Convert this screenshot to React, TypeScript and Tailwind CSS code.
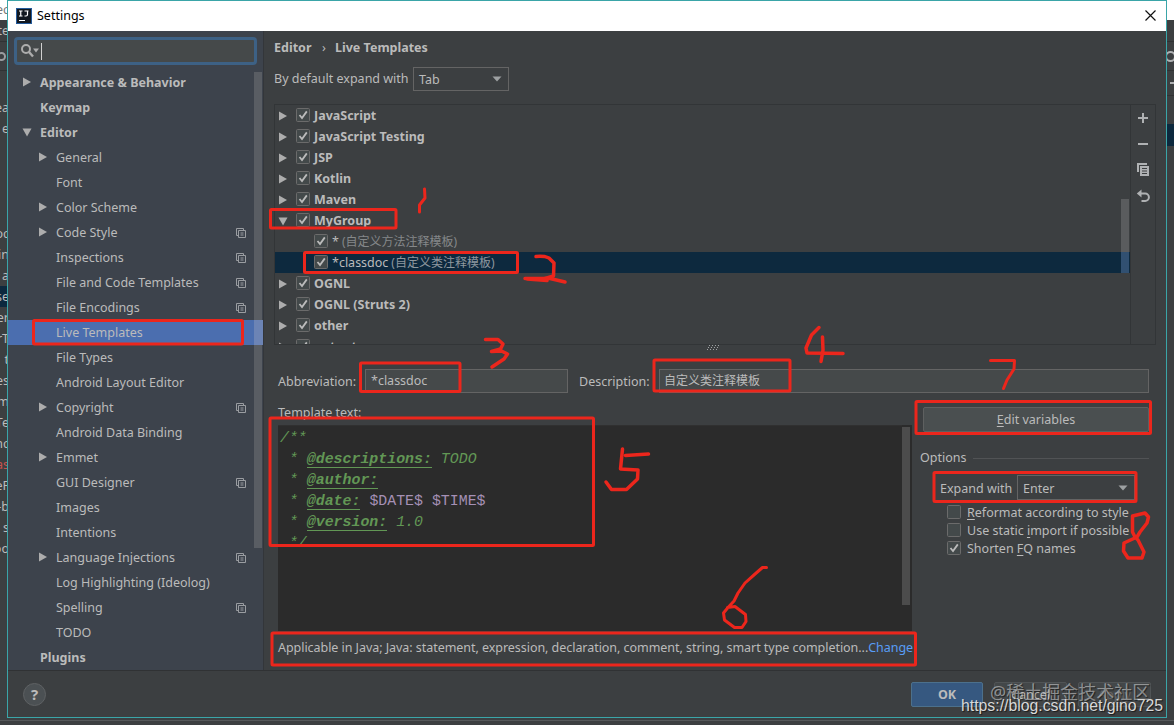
import React from 'react';
import clsx from 'clsx';

type NavItem = {
    label: string;
    level: 0 | 1;
    arrow?: 'right' | 'down';
    copy?: boolean;
    selected?: boolean;
};

const NAV: NavItem[] = [
    { label: 'Appearance & Behavior', level: 0, arrow: 'right' },
    { label: 'Keymap', level: 0 },
    { label: 'Editor', level: 0, arrow: 'down' },
    { label: 'General', level: 1, arrow: 'right' },
    { label: 'Font', level: 1 },
    { label: 'Color Scheme', level: 1, arrow: 'right' },
    { label: 'Code Style', level: 1, arrow: 'right', copy: true },
    { label: 'Inspections', level: 1, copy: true },
    { label: 'File and Code Templates', level: 1, copy: true },
    { label: 'File Encodings', level: 1, copy: true },
    { label: 'Live Templates', level: 1, selected: true },
    { label: 'File Types', level: 1 },
    { label: 'Android Layout Editor', level: 1 },
    { label: 'Copyright', level: 1, arrow: 'right', copy: true },
    { label: 'Android Data Binding', level: 1 },
    { label: 'Emmet', level: 1, arrow: 'right' },
    { label: 'GUI Designer', level: 1, copy: true },
    { label: 'Images', level: 1 },
    { label: 'Intentions', level: 1 },
    { label: 'Language Injections', level: 1, arrow: 'right', copy: true },
    { label: 'Log Highlighting (Ideolog)', level: 1 },
    { label: 'Spelling', level: 1, copy: true },
    { label: 'TODO', level: 1 },
    { label: 'Plugins', level: 0 },
];

type TemplateRow = { label: string; note?: string; open?: boolean; child?: boolean; selected?: boolean };

const TEMPLATES: TemplateRow[] = [
    { label: 'JavaScript' },
    { label: 'JavaScript Testing' },
    { label: 'JSP' },
    { label: 'Kotlin' },
    { label: 'Maven' },
    { label: 'MyGroup', open: true },
    { label: '*', note: '(自定义方法注释模板)', child: true },
    { label: '*classdoc', note: '(自定义类注释模板)', child: true, selected: true },
    { label: 'OGNL' },
    { label: 'OGNL (Struts 2)' },
    { label: 'other' },
    { label: 'output' },
];

// Slivers of the IDE window behind the dialog, one per 21px line
const BEHIND = ['ea', 'e', '', '', '', '', 'oc', 'cin', 'a', 'se', 'er', 'rT', 't', 'es', 'm', 'Te', 'nc', 'as', 'eF', '-b', 's', 'oo'];

const Arrow = ({ dir }: { dir: 'right' | 'down' }) => (
    <svg width="10" height="10" viewBox="0 0 10 10" className="shrink-0" fill="#adadad">
        {dir === 'right' ? <path d="M1 .5 9 5 1 9.5z" /> : <path d="M.5 1.5h9L5 9.5z" />}
    </svg>
);

const Check = ({ on = true }: { on?: boolean }) => (
    <svg width="14" height="14" viewBox="0 0 14 14" className="shrink-0" fill="none">
        <rect x=".5" y=".5" width="13" height="13" rx="1" fill="#43494a" stroke="#6b6b6b" />
        {on && <path d="M3.5 7 6 10 10.8 3.4" stroke="#bbbbbb" strokeWidth="1.8" />}
    </svg>
);

const CopyMark = () => (
    <svg width="10" height="10" viewBox="0 0 10 10" fill="none" stroke="#9a9da1" className="shrink-0">
        <path d="M2.5 7.5h-2v-7h7v2" />
        <path d="M2.5 2.5h7v7h-7zM4.5 5h3M4.5 7h3" />
    </svg>
);

const Caret = () => (
    <svg width="10" height="6" viewBox="0 0 10 6" className="shrink-0">
        <path d="M.5.5h9L5 5.5z" fill="#9da0a2" />
    </svg>
);

const Sidebar = () => (
    <div className="flex h-[639px] w-[256px] shrink-0 flex-col border-r border-[#33363a] bg-[#3d434c]">
        <div className="ml-[6px] mt-[6px] flex h-[28px] w-[243px] items-center rounded-[4px] border-[3px] border-[#3d6185] bg-[#45494a] pl-[4px]">
            <svg width="18" height="14" viewBox="0 0 18 14" fill="none">
                <circle cx="5" cy="5" r="4" stroke="#adadad" strokeWidth="2" />
                <path d="m8 8 4 4.5" stroke="#adadad" strokeWidth="2.4" />
                <path d="M12 4.5h6l-3 4z" fill="#adadad" />
            </svg>
            <div className="ml-[2px] h-[17px] w-px bg-[#d0d0d0]" />
        </div>
        <div className="mt-[5px] flex grow">
            <div className="w-[246px]">
                {NAV.map((item) => (
                    <div
                        key={item.label}
                        className={clsx(
                            'flex h-[25px] items-center whitespace-nowrap pr-[8px]',
                            item.level === 0 ? 'pl-[14px] font-bold' : 'pl-[30px]',
                            item.selected && 'bg-[#4b6eaf]'
                        )}
                    >
                        <div className="flex w-[18px] shrink-0 items-center pb-px">{item.arrow && <Arrow dir={item.arrow} />}</div>
                        <span className="grow">{item.label}</span>
                        {item.copy && <CopyMark />}
                    </div>
                ))}
            </div>
            <div className="flex w-[9px] flex-col">
                <div className="mt-[2px] h-[248px] w-[8px] bg-[#595d63]" />
                <div className="h-[25px] bg-[#6c84b5]" />
                <div className="h-[203px] w-[8px] bg-[#595d63]" />
            </div>
        </div>
    </div>
);

const TemplateTree = () => (
    <div className="ml-[10px] mt-[13px] flex h-[241px] w-[882px] border border-[#323537]">
        <div className="flex h-[239px] w-[855px] flex-col overflow-hidden">
            {TEMPLATES.map((row) => (
                <div
                    key={row.label}
                    className={clsx(
                        'flex h-[21px] shrink-0 items-center whitespace-nowrap',
                        row.child ? 'pl-[39px]' : 'pl-[3px]',
                        row.selected && 'bg-[#0d293e]'
                    )}
                >
                    {!row.child && (
                        <div className="flex w-[18px] shrink-0">
                            <Arrow dir={row.open ? 'down' : 'right'} />
                        </div>
                    )}
                    <div className="pb-px">
                        <Check />
                    </div>
                    <span className={clsx('ml-[4px]', !row.child && 'font-bold')}>{row.label}</span>
                    {row.note && (
                        <span className={clsx('ml-[3px] text-[12px]', row.selected ? 'text-[#8e979e]' : 'text-[#85888a]')}>{row.note}</span>
                    )}
                </div>
            ))}
        </div>
        <div className="relative w-0">
            <div className="absolute right-[1px] top-[94px] h-[53px] w-[8px] bg-[#5a5c5e]" />
            <div className="absolute right-[1px] top-[147px] h-[21px] w-[8px] bg-[#315071]" />
        </div>
        <div className="flex grow flex-col border-l border-[#323537] pl-[4px]">
            <svg width="16" height="100" viewBox="0 0 16 100" fill="none" stroke="#afb1b3" strokeWidth="2">
                <path d="M3 13h10M8 8v10M3 39h10" />
                <path d="M3 67v-8h9" />
                <path d="M5 61h9v10H5z" fill="#afb1b3" stroke="none" />
                <path d="M7 63.5h5M7 66h5M7 68.5h5" stroke="#3c3f41" strokeWidth="1" />
                <path d="M4 88.5h6.2a3.7 3.7 0 0 1 0 7.4H6.5" />
                <path d="M1.8 88.5 6.5 84.5v8z" fill="#afb1b3" stroke="none" />
            </svg>
        </div>
    </div>
);

const Tag = ({ children }: { children: React.ReactNode }) => (
    <span className="border-b border-[#629755] font-bold text-[#629755]">{children}</span>
);

const TemplateEditor = () => (
    <div className="flex h-[206px] w-[634px] bg-[#2b2b2b]">
        <div className="h-[206px] grow whitespace-pre border-t border-[#303030] pl-[2px] pt-[2px] font-['Liberation_Mono',monospace] text-[14.9px] italic leading-[21px] text-[#629755]">
            <div className="h-[21px]">/**</div>
            <div className="h-[21px]"> * <Tag>@descriptions:</Tag> TODO</div>
            <div className="h-[21px]"> * <Tag>@author:</Tag></div>
            <div className="h-[21px]">
                {' * '}<Tag>@date:</Tag> <span className="not-italic text-[#a590b5]">$DATE$ $TIME$</span>
            </div>
            <div className="h-[21px]"> * <Tag>@version:</Tag> 1.0</div>
            <div className="h-[21px]"> */</div>
        </div>
        <div className="mr-[2px] mt-[2px] h-[178px] w-[8px] bg-[#4c4c4c]" />
    </div>
);

const OptionsPanel = () => (
    <div className="ml-[8px] mt-[14px] flex w-[229px] flex-col">
        <div className="ml-[3px] flex h-[25px] w-[226px] items-center justify-center rounded-[2px] border border-[#5e6060] bg-[#4a4f50]">
            <span><u className="underline-offset-2">E</u>dit variables</span>
        </div>
        <div className="mt-[16px] flex h-[20px] items-center gap-[7px]">
            Options
            <div className="h-px grow bg-[#515355]" />
        </div>
        <div className="mt-[7px] flex h-[25px] items-center pl-[20px]">
            <span className="w-[77px] whitespace-nowrap pt-[2px]">Expand with</span>
            <div className="flex h-[25px] w-[118px] items-center justify-between border border-[#646464] pl-[5px] pr-[6px]">
                <span className="pt-[2px]">Enter</span>
                <Caret />
            </div>
        </div>
        <div className="mt-[3px] flex flex-col pl-[27px]">
            <div className="flex h-[18px] items-center gap-[6px] whitespace-nowrap">
                <Check on={false} />
                <span className="pt-[2px]"><u className="underline-offset-2">R</u>eformat according to style</span>
            </div>
            <div className="flex h-[18px] items-center gap-[6px] whitespace-nowrap">
                <Check on={false} />
                <span className="pt-[2px]">Use static <u className="underline-offset-2">i</u>mport if possible</span>
            </div>
            <div className="flex h-[18px] items-center gap-[6px] whitespace-nowrap">
                <Check />
                <span className="pt-[2px]">Shorten <u className="underline-offset-2">F</u>Q names</span>
            </div>
        </div>
    </div>
);

const MainPane = () => (
    <div className="flex h-[639px] grow flex-col">
        <div className="ml-[10px] mt-[7px] flex h-[20px] items-center font-bold">
            <span className="w-[48px]">Editor</span>
            <span className="w-[13px] font-normal">›</span>
            <span>Live Templates</span>
        </div>
        <div className="ml-[10px] mt-[9px] flex h-[24px] items-center">
            <span className="w-[139px] whitespace-nowrap">By default expand with</span>
            <div className="flex h-[24px] w-[96px] items-center justify-between border border-[#646464] pl-[5px] pr-[6px]">
                <span className="pt-[2px]">Tab</span>
                <Caret />
            </div>
        </div>
        <TemplateTree />
        <div className="flex h-[24px] justify-center pr-[4px]">
            <svg width="14" height="5" viewBox="0 0 14 5">
                <path d="M1 4.5h1m2 0h1m2 0h1m2 0h1M2 2.5h1m2 0h1m2 0h1m2 0h1M3 .5h1m2 0h1m2 0h1m2 0h1" stroke="#a0a2a4" />
            </svg>
        </div>
        <div className="flex h-[24px] items-center pl-[14px]">
            <span className="w-[87px] whitespace-nowrap pt-[2px]">Abbreviation:</span>
            <div className="flex h-[24px] w-[203px] items-center border border-[#646464] bg-[#45494a] pb-px pl-[5px]">*classdoc</div>
            <span className="ml-[11px] w-[80px] whitespace-nowrap pt-[2px]">Description:</span>
            <div className="flex h-[24px] w-[490px] items-center border border-[#646464] bg-[#45494a] pl-[4px] text-[12px]">自定义类注释模板</div>
        </div>
        <div className="flex">
            <div className="flex w-[648px] flex-col pl-[14px]">
                <div className="mt-[10px] h-[22px]">Template text:</div>
                <TemplateEditor />
                <div className="mt-[7px] flex h-[20px] items-center whitespace-nowrap tracking-[-0.045px]">
                    Applicable in Java; Java: statement, expression, declaration, comment, string, smart type completion...
                    <span className="text-[#589df6]">Change</span>
                </div>
            </div>
            <OptionsPanel />
        </div>
    </div>
);

const Footer = () => (
    <div className="flex h-[47px] items-center border-t border-[#303234] pl-[15px]">
        <div className="flex size-[23px] items-center justify-center rounded-full border border-[#5e6163] bg-[#4b5053] text-[15px] font-bold">?</div>
        <div className="ml-[865px] flex gap-[11px]">
            <div className="flex h-[25px] w-[72px] items-center justify-center rounded-[2px] border border-[#4c708c] bg-[#365880] pt-px font-bold">OK</div>
            <div className="flex h-[25px] w-[73px] items-center justify-center rounded-[2px] border border-[#505456] bg-[#434749] pt-px">Cancel</div>
            <div className="flex h-[25px] w-[73px] items-center justify-center rounded-[2px] border border-[#505456] bg-[#434749] pt-px text-[#666]">Apply</div>
        </div>
    </div>
);

// Red boxes and hand-drawn step numbers 1-8
const Annotations = () => (
    <svg width="1174" height="725" viewBox="0 0 1174 725" className="absolute left-0 top-0" fill="none" stroke="#ec261c" strokeWidth="3" strokeLinecap="round" strokeLinejoin="round">
        <rect x="33.5" y="320.5" width="209" height="23.5" rx="1" />
        <rect x="270.5" y="209.5" width="125.5" height="18.5" rx="1" />
        <rect x="304.5" y="252.5" width="213" height="20" rx="1" />
        <rect x="360.5" y="363" width="99.5" height="28.5" rx="1" />
        <rect x="654" y="360" width="136" height="31" rx="1" />
        <rect x="270" y="418" width="323.5" height="127.5" rx="1" />
        <rect x="272" y="633" width="643.5" height="32" rx="1" />
        <rect x="916" y="401.5" width="234.5" height="32" rx="1" />
        <rect x="934" y="472.5" width="202" height="29" rx="1" />
        <path d="M424.5 189 425 198l-5.5 7v7" />
        <path d="M536 256.5c6-.5 10 0 13 1.5l5 5-.5 13-10 3" strokeWidth="3.5" />
        <path d="M525 278.5h25l15 3.5M527 279l20 1.5" strokeWidth="3.5" />
        <path d="M485.5 339.500 498 339.500l5 4.500-2.500 5-9 2.500 10-.5 6 3-3.500 5-12 8" strokeWidth="3.5" />
        <path d="M819 327.5 811.5 335 806 348l1 5 36 .5M822.5 337l.5 13-2 11.5" strokeWidth="3.5" />
        <path d="M622.5 449 620.5 469l17.5 1-.5 9-11 10.500h-15L606 482M625.5 455.5l23-1.5" strokeWidth="3.5" />
        <path d="M766.5 567.5h-4l-8 7-9.5 8.500-7 10-4 8-6 6.500-4.500 5.500 1 7 10 7.500h7.500l4-6-.5-7-10.500-8-7.500 1" />
        <path d="M990.5 360.5h24l-.5 8.500-7 11-3.500 8.500" />
        <path d="M1132.5 532v-16l12.500-3 3.500 4-1.500 6-7 9-3 5-13 6-.5 8 4.500 7h14l2-6-6-12-3-3z" strokeWidth="3.5" />
    </svg>
);

const App: React.FC = () => {
    return (
        <div className="relative flex h-[725px] w-[1174px] flex-col overflow-hidden bg-[#3c3f41] font-['Noto_Sans','Noto_Sans_CJK_SC',sans-serif] text-[12.5px] leading-[20px] text-[#bbbbbb]">
            <div className="flex h-[718px]">
                {/* IDE window, left edge */}
                <div className="flex w-[7px] shrink-0 flex-col overflow-hidden whitespace-nowrap">
                    <div className="-mr-[2px] flex h-[20px] items-center justify-end bg-white text-[#777]">ec</div>
                    <div className="-mr-[2px] flex h-[22px] items-center justify-end border-b border-[#303234]">te</div>
                    <div className="flex h-[29px] items-center border-b border-[#303234]">
                        <div className="-ml-[3px] size-[9px] shrink-0 rounded-full border-2 border-[#9a9da0]" />
                    </div>
                    <div className="h-[26px]" />
                    {BEHIND.map((text, i) => (
                        <div
                            key={i}
                            className={clsx('-mr-[2px] flex h-[21px] shrink-0 items-center justify-end', text === 'se' && 'bg-[#0d293e]', text === 'as' && 'text-[#c75450]')}
                        >
                            {text}
                        </div>
                    ))}
                </div>

                {/* Settings dialog */}
                <div className="flex w-[1160px] shrink-0 flex-col border border-[#3aa5a8]">
                    <div className="flex h-[30px] shrink-0 items-center bg-white pb-px pl-[8px] pr-[10px] text-black">
                        <svg width="16" height="16" viewBox="0 0 16 16" fill="none">
                            <rect x=".5" y=".5" width="15" height="15" fill="#111820" stroke="#245a9b" />
                            <path d="M3 3h3.5M4.75 3v5M3 8h3.5M8.5 3h4M11.5 3v3.5q0 1.5-1.5 1.5H8.5M3 12.5h6" stroke="#fff" strokeWidth="1.2" />
                        </svg>
                        <span className="ml-[5px] grow">Settings</span>
                        <svg width="11" height="11" viewBox="0 0 11 11" stroke="#111" strokeWidth="1.2">
                            <path d="m.5.5 10 10m0-10-10 10" />
                        </svg>
                    </div>
                    <div className="flex h-[639px]">
                        <Sidebar />
                        <MainPane />
                    </div>
                    <Footer />
                </div>

                {/* IDE window, right edge */}
                <div className="flex w-[7px] shrink-0 flex-col overflow-hidden">
                    <div className="h-[20px] bg-white" />
                    <div className="h-[22px] border-b border-[#303234]" />
                    <div className="flex h-[29px] items-center border-b border-[#303234]">
                        <div className="-ml-[2px] size-[11px] shrink-0 rounded-full border-2 border-[#afb1b3]" />
                    </div>
                    <div className="flex h-[25px] items-center justify-end border-b border-[#303234]">
                        <div className="h-[2px] w-[4px] bg-[#afb1b3]" />
                    </div>
                    <div className="mt-[28px] h-[22px] bg-[#0d293e]" />
                </div>
            </div>
            <div className="h-[7px] pt-[2px]">
                <div className="h-px bg-[#55585a]" />
            </div>

            <Annotations />
            <div className="absolute left-[990px] top-[680px] whitespace-nowrap text-[18px] leading-[24px] text-white/45 [text-shadow:1px_1px_1px_#0008]">@稀土掘金技术社区</div>
            <div className="absolute left-[961px] top-[696px] whitespace-nowrap font-['Liberation_Sans',sans-serif] text-[15.8px] leading-[20px] text-[#d8d8d8] [text-shadow:1px_1px_1px_#0009]">https://blog.csdn.net/gino725</div>
        </div>
    );
};

export default App;
